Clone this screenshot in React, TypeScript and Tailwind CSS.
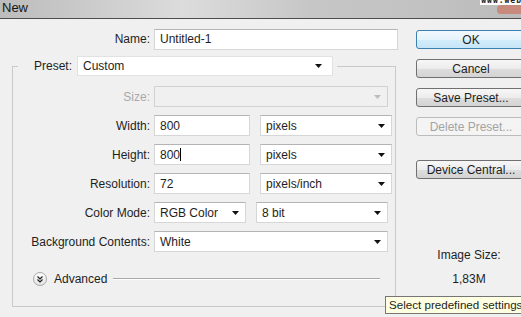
import React from "react";

const Arrow = ({ color = "#111" }: { color?: string }) => (
  <svg width="7" height="4" viewBox="0 0 7 4" className="shrink-0">
    <path d="M0 0h7L3.5 4z" fill={color} />
  </svg>
);

const Select = ({ value, w, disabled }: { value?: string; w: string; disabled?: boolean }) => (
  <div
    className={`${w} h-[21px] flex items-center justify-between pl-[5px] pr-[6px] border ${
      disabled
        ? "bg-[#f0f0f0] border-[#d2d2d2]"
        : "bg-white border-[#d6d6d6] border-t-[#b4b4b4]"
    }`}
  >
    <span>{value}</span>
    <Arrow color={disabled ? "#bdbdbd" : "#111"} />
  </div>
);

const Input = ({ value, w, caret }: { value: string; w: string; caret?: boolean }) => (
  <div className={`${w} h-[21px] flex items-center pl-[5px] bg-white border border-[#d6d6d6] border-t-[#b4b4b4]`}>
    <span>{value}</span>
    {caret && <span className="w-px h-[13px] bg-black" />}
  </div>
);

const Row = ({ label, muted, children }: { label: string; muted?: boolean; children: React.ReactNode }) => (
  <div className="flex items-center h-[21px]">
    <div className={`w-[137px] text-right ${muted ? "text-[#a9a9a9]" : ""}`}>{label}</div>
    <div className="ml-[4px] flex items-center gap-[10px]">{children}</div>
  </div>
);

const Button = ({ label, kind }: { label: string; kind?: "default" | "disabled" }) => {
  const look =
    kind === "default"
      ? "border-[#3c7fb1] bg-[linear-gradient(#f2f9fd,#e4f3fc_50%,#d3ecfa_51%,#c6e5f7)]"
      : kind === "disabled"
      ? "border-[#bcbcbc] bg-[#f4f4f4] text-[#a3a3a3]"
      : "border-[#707070] bg-[linear-gradient(#f7f7f7,#ececec_50%,#dedede_51%,#d3d3d3)]";
  return (
    <div className={`w-[110px] h-[19px] rounded-[3px] border flex items-center justify-center ${look}`}>
      {label}
    </div>
  );
};

export default function App() {
  return (
    <div className="relative w-[521px] h-[317px] overflow-hidden bg-[#f0f0f0] text-[12px] leading-[14px] text-[#1e1e1e] font-['Liberation_Sans',Arial,sans-serif]">
      {/* title bar */}
      <div className="relative h-[19px] border-b border-[#4d4d4d] bg-[linear-gradient(to_right,#bcbcbc,#c9c9c9_15%,#dcdcdc_35%,#c6c6c6_60%,#c2c2c2_80%,#bbbbbb)]">
        <span className="absolute left-[2px] top-[1px] text-[13px] text-[#151515]">New</span>
        <span className="absolute right-[-2px] top-[-4px] px-[1px] bg-white text-[8px] leading-[9px] font-bold tracking-[1px] font-['DejaVu_Sans_Mono',monospace]">
          www.web
        </span>
        <span className="absolute right-[-6px] top-[5px] w-[30px] h-[9px] rounded-[4px] bg-[#c78a7c]" />
      </div>

      <div className="flex">
        {/* left side */}
        <div className="w-[416px] shrink-0 pt-[10px]">
          <div className="flex items-center h-[20px]">
            <div className="w-[150px] text-right">Name:</div>
            <div className="ml-[4px]">
              <Input value="Untitled-1" w="w-[244px]" />
            </div>
          </div>

          <fieldset className="ml-[12px] mt-[7px] w-[384px] border border-[#c9c9c9]">
            <legend className="ml-[5px]">
              <div className="flex items-center gap-[5px] pl-[16px] pr-[4px]">
                <span>Preset:</span>
                <div className="w-[256px] h-[20px] flex items-center justify-between pl-[5px] pr-[10px] bg-white border border-[#e2e2e2]">
                  <span>Custom</span>
                  <Arrow />
                </div>
              </div>
            </legend>

            <div className="pt-[10px] flex flex-col gap-[8px]">
              <Row label="Size:" muted>
                <Select w="w-[234px]" disabled />
              </Row>
              <Row label="Width:">
                <Input value="800" w="w-[96px]" />
                <Select value="pixels" w="w-[132px]" />
              </Row>
              <Row label="Height:">
                <Input value="800" w="w-[96px]" caret />
                <Select value="pixels" w="w-[132px]" />
              </Row>
              <Row label="Resolution:">
                <Input value="72" w="w-[96px]" />
                <Select value="pixels/inch" w="w-[132px]" />
              </Row>
              <Row label="Color Mode:">
                <Select value="RGB Color" w="w-[92px]" />
                <Select value="8 bit" w="w-[132px]" />
              </Row>
              <Row label="Background Contents:">
                <Select value="White" w="w-[234px]" />
              </Row>
            </div>

            <div className="mt-[19px] mb-[19px] h-[16px] flex items-center pl-[20px] pr-[15px]">
              <div className="w-[14px] h-[14px] rounded-full border border-[#a8a8a8] bg-[linear-gradient(#fdfdfd,#e4e4e4)] flex items-center justify-center">
                <svg width="8" height="8" viewBox="0 0 8 8">
                  <path d="M1.5 1.5L4 4l2.5-2.5M1.5 4.5L4 7l2.5-2.5" stroke="#222" strokeWidth="1.2" fill="none" />
                </svg>
              </div>
              <span className="ml-[7px]">Advanced</span>
              <div className="ml-[6px] flex-1 h-[2px] border-t border-[#a9a9a9] border-b border-b-white" />
            </div>
          </fieldset>
        </div>

        {/* right side */}
        <div className="pt-[11px] flex flex-col shrink-0">
          <Button label="OK" kind="default" />
          <div className="mt-[10px]">
            <Button label="Cancel" />
          </div>
          <div className="mt-[10px]">
            <Button label="Save Preset..." />
          </div>
          <div className="mt-[10px]">
            <Button label="Delete Preset..." kind="disabled" />
          </div>
          <div className="mt-[24px]">
            <Button label="Device Central..." />
          </div>
          <div className="mt-[69px] w-[106px] text-center">Image Size:</div>
          <div className="mt-[10px] w-[106px] text-center">1,83M</div>
        </div>
      </div>

      {/* tooltip */}
      <div className="absolute left-[385px] top-[296px] h-[18px] pl-[3px] pr-[4px] flex items-center border border-[#767676] bg-[#ffffe1] whitespace-nowrap text-[11.6px]">
        Select predefined settings
      </div>
    </div>
  );
}
